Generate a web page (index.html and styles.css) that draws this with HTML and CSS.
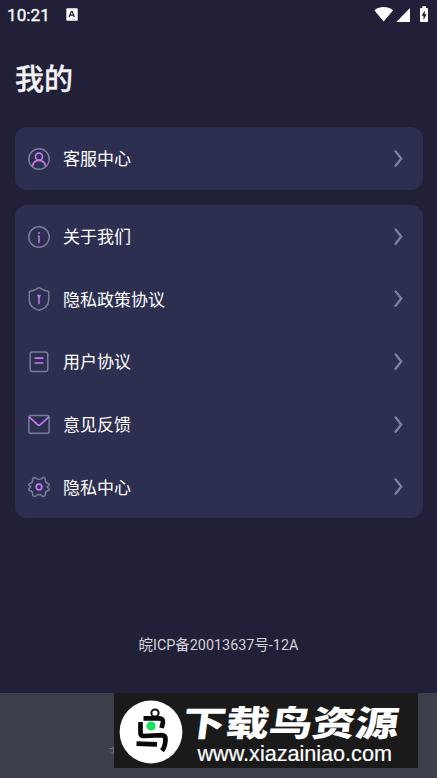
FILE: index.html
```html
<!DOCTYPE html>
<html lang="zh-CN">
<head>
<meta charset="utf-8">
<title>我的</title>
<link rel="stylesheet" href="styles.css">
</head>
<body>
<svg class="defs" width="0" height="0"><defs>
<linearGradient id="pink" gradientUnits="userSpaceOnUse" x1="4" y1="19" x2="20" y2="5"><stop offset="0" stop-color="#e070e8"/><stop offset="1" stop-color="#a780f4"/></linearGradient>
<symbol id="chevron" viewBox="0 0 10 18"><path d="M1.6 1.4L7.2 8.6L1.6 15.8" fill="none" stroke="#81819f" stroke-width="2.3" stroke-linecap="round"/></symbol>
</defs></svg>
<header class="status">
  <span class="time">10:21</span>
  <svg class="badge-a" width="12" height="13" viewBox="0 0 12 13"><rect x=".3" y=".2" width="11.4" height="12.6" rx="1" fill="#fff"/><path d="M3.1 9L5.3 3.6H6.2L8.4 9M4 7.2H7.5" fill="none" stroke="#212038" stroke-width="1.3"/><path d="M6.3 11.2H9.7" stroke="#777786" stroke-width=".7" stroke-dasharray="1 .6"/></svg>
  <svg class="signals" width="56" height="18" viewBox="0 0 56 18"><g fill="#fff"><path d="M.3 4.2C5.7-.2 13.7-.2 19.1 4.2L9.7 15.6Z"/><path d="M36 2V16H22.3Z"/><path d="M47 2H48.3V.2H52V2H53.2Q54 2 54 2.8V15.1Q54 16 53.2 16H47Q46 16 46 15.1V2.9Q46 2 47 2Z"/></g><path d="M50.8 4.4L47.5 9.8H49.5V14L52.6 8.3H50.8Z" fill="#212038"/></svg>
</header>
<h1>我的</h1>
<main>
  <section class="card">
    <a class="row"><svg class="icon" viewBox="0 0 24 24"><circle cx="12" cy="12" r="10.2" class="line"/><circle cx="12" cy="9.7" r="3.5" class="accent"/><path d="M5.5 18.6C6.6 15.1 9.2 13.4 12 13.4S17.4 15.1 18.5 18.6" class="accent"/></svg><span>客服中心</span><svg class="arrow"><use href="#chevron"/></svg></a>
  </section>
  <section class="card">
    <a class="row"><svg class="icon" viewBox="0 0 24 24"><circle cx="12" cy="12" r="10.2" class="line"/><path d="M11.6 8H12.4M11.4 11.2H12V17.6" class="accent thin"/></svg><span>关于我们</span><svg class="arrow"><use href="#chevron"/></svg></a>
    <a class="row"><svg class="icon" viewBox="0 0 24 24"><path d="M12 .7Q16.5 3.7 21.7 4.5V13.2C21.7 18.5 17.1 21.7 12 23.3C6.9 21.7 2.3 18.5 2.3 13.2V4.5Q7.5 3.7 12 .7Z" class="line"/><path d="M12 8.5V16.7M10.8 8.5H13.2M11.3 10H12.7" class="accent thin"/></svg><span>隐私政策协议</span><svg class="arrow"><use href="#chevron"/></svg></a>
    <a class="row"><svg class="icon" viewBox="0 0 24 24"><rect x="3.2" y="2" width="17.6" height="19.6" rx="2.3" class="line"/><path d="M8.2 8.1H15.8M8.2 13H15.8" class="accent"/></svg><span>用户协议</span><svg class="arrow"><use href="#chevron"/></svg></a>
    <a class="row"><svg class="icon" viewBox="0 0 24 24"><rect x="1.9" y="2.5" width="20.2" height="17.7" rx="1.8" class="line"/><path d="M2.7 4.3L10.6 11.6Q12 13 13.4 11.6L21.3 4.3" class="accent"/></svg><span>意见反馈</span><svg class="arrow"><use href="#chevron"/></svg></a>
    <a class="row"><svg class="icon" viewBox="0 0 24 24"><path d="M7.2 2.6Q8.5 2.4 9.3 3.5Q12 5.4 14.7 3.5Q15.5 2.4 16.8 2.6Q18.8 3.4 18.4 5.2Q18.4 8 20.8 8.2Q22.4 8.7 22.3 10.2Q20.3 11.5 20.3 12Q20.3 12.5 22.3 13.8Q22.4 15.3 20.8 15.8Q18.4 16 18.4 18.8Q18.8 20.6 16.8 21.4Q15.5 21.6 14.7 20.5Q12 18.6 9.3 20.5Q8.5 21.6 7.2 21.4Q5.2 20.6 5.6 18.8Q5.6 16 3.2 15.8Q1.6 15.3 1.7 13.8Q3.7 12.5 3.7 12Q3.7 11.5 1.7 10.2Q1.6 8.7 3.2 8.2Q5.6 8 5.6 5.2Q5.2 3.4 7.2 2.6Z" class="line"/><circle cx="12" cy="12" r="2.8" class="accent"/></svg><span>隐私中心</span><svg class="arrow"><use href="#chevron"/></svg></a>
  </section>
</main>
<p class="record">皖ICP备20013637号-12A</p>
<footer>
  <svg class="tab" width="6" height="10" viewBox="0 0 6 10"><path d="M0 2.5H6M1 7H6M4.5 0V7" fill="none" stroke="#6c6c88" stroke-width="1"/></svg>
  <div class="brand">
    <svg class="bird" width="64" height="64" viewBox="0 0 64 64"><circle cx="32" cy="32" r="31.4" fill="#fff"/><g fill="none" stroke="#080808" stroke-width="4.7" stroke-linejoin="round"><path d="M24.5 18.3H39Q44.5 18.3 44 22L42.6 28"/><path d="M21.5 22V33Q21.5 36 24.7 36L43 35.2Q46.8 35.5 46.5 40Q46 47 43 50.8"/><path d="M17.5 43.6L38 44.3"/><circle cx="36" cy="13" r="3.6" stroke-width="2"/></g><circle cx="32" cy="26" r="4.6" fill="#1bdf5d"/></svg>
    <div class="words"><strong>下载鸟资源</strong><span>www.xiazainiao.com</span></div>
  </div>
</footer>
</body>
</html>
```
FILE: styles.css
```css
* { box-sizing: border-box; }
body {
  margin: 0;
  height: 778px;
  display: flex;
  flex-direction: column;
  overflow: hidden;
  background: #212038;
  color: #fff;
  font-family: Roboto, "Noto Sans CJK SC", sans-serif;
}
.defs { position: absolute; }
.status {
  height: 30px;
  flex: none;
  display: flex;
  align-items: center;
  padding: 0 7px 0 7px;
}
.time { width: 59px; font-size: 17.2px; line-height: 30px; font-weight: 400; -webkit-text-stroke: .3px #fff; }
.badge-a { flex: none; margin-top: -1px; }
.signals { margin-left: auto; margin-top: -1px; }
h1 {
  flex: none;
  height: 97px;
  margin: 0;
  padding: 28px 15px 0;
  font-size: 29px;
  line-height: 44px;
  font-weight: 500;
  -webkit-text-stroke: .3px #f3f3f3;
  color: #f3f3f3;
}
main { flex: none; display: grid; gap: 15px; padding: 0 14.5px; }
.card { background: #2d2f50; border-radius: 12px; }
.row {
  height: 62.7px;
  display: flex;
  align-items: center;
  padding: 1px 19px 0 12.2px;
  font-size: 17px;
}
.row span { margin-left: 12.3px; line-height: 26px; padding-top: .6px; }
.icon { width: 24px; height: 24px; flex: none; }
.line { fill: none; stroke: #7c7b9c; stroke-width: 1.5; stroke-linejoin: round; }
.accent { fill: none; stroke: url(#pink); stroke-width: 1.7; stroke-linecap: round; }
.thin { stroke-width: 1.5; }
.arrow { width: 10px; height: 18px; margin-left: auto; }
.record {
  margin: 117px 0 0;
  text-align: center;
  font-size: 14.4px;
  line-height: 22px;
  color: #d3d3d8;
}
footer {
  height: 85px;
  flex: none;
  margin-top: auto;
  display: flex;
  align-items: flex-start;
  padding-left: 109px;
  background: #3d3f4a;
}
.tab { flex: none; margin: 53px -1px 0 0; }
.brand {
  width: 304px;
  height: 75px;
  flex: none;
  display: flex;
  padding: 7px 0 0 4.5px;
  background: #1a1a1a;
}
.bird { flex: none; }
.words { padding: 2px 0 0 4px; white-space: nowrap; }
.words strong {
  display: block;
  height: 40px;
  font: 900 35px/37px "Noto Sans CJK SC", sans-serif;
  transform-origin: 0 50%;
  transform: translateX(-4px) scaleX(1.235) skewX(-6deg);
}
.words span {
  display: block;
  margin-left: 11px;
  font: 21.6px/23px "Liberation Sans", sans-serif;
  -webkit-text-stroke: .2px #fff;
}
```
